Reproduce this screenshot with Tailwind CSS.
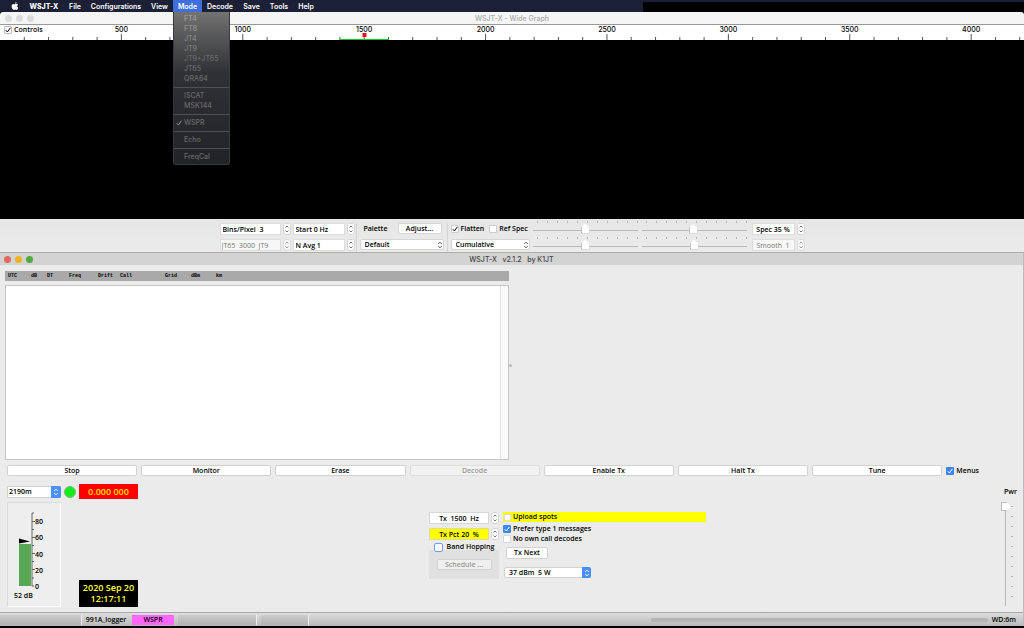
<!DOCTYPE html>
<html lang="en">
<head>
<meta charset="utf-8">
<title>WSJT-X</title>
<script src="https://cdn.jsdelivr.net/npm/@tailwindcss/browser@4"></script>
</head>
<body class="min-h-screen flex flex-col bg-black text-black text-[7px] leading-[10px] font-semibold font-['Open_Sans',sans-serif] overflow-x-hidden">
<svg class="hidden">
  <symbol id="spin" viewBox="0 0 8 12"><rect x=".5" y=".5" width="7" height="11" rx="2.500" fill="#fff" stroke="#d4d4d4"/><path d="M2.500 4.500 4 3l1.500 1.500M2.500 7.500 4 9l1.500-1.500" fill="none" stroke="#666" stroke-width=".9"/></symbol>
  <symbol id="updown" viewBox="0 0 6 8"><path d="M1.200 3 3 1.200 4.800 3M1.200 5 3 6.800 4.800 5" fill="none" stroke="currentColor" stroke-width=".9"/></symbol>
  <symbol id="tick" viewBox="0 0 8 8"><path d="M1.800 4.200 3.400 6 6.400 1.800" fill="none" stroke="currentColor" stroke-width="1"/></symbol>
</svg>

<nav class="h-3 flex bg-[#1c2036] text-white leading-[13px] font-['Inter',sans-serif] [&_button]:h-3">
  <button class="w-6 flex justify-end items-center pr-[5px]" aria-label="Apple menu"><svg class="w-2 h-2" viewBox="0 0 16 16" fill="#fff"><path d="M11 0c.1 1.700-1.300 3.400-3 3.400C7.800 1.800 9.300.2 11 0zM8.200 4.500c.7 0 1.600-.8 3-.8 1.100 0 2.200.6 2.900 1.600-2.600 1.500-2.100 5 .5 6.100-.6 1.700-2 4.400-3.500 4.400-1.100 0-1.500-.7-2.800-.7s-1.800.7-2.800.7C3.500 15.800 1 11.800 1.200 8.500c.1-3 2-4.700 4-4.700 1.300 0 2.300.7 3 .7z"/></svg></button>
  <button class="w-10 font-extrabold">WSJT-X</button>
  <button class="w-[22px]">File</button>
  <button class="w-[60px]">Configurations</button>
  <button class="w-[27px]">View</button>
  <div class="relative w-[29px]">
    <button class="w-full block bg-[#3f6fdc]">Mode</button>
    <ul class="absolute z-10 left-0 top-3 w-[57px] pt-[2px] pb-[2px] rounded-b-[3px] bg-linear-to-b from-[#737373] via-[#303134] via-40% to-[#222327] leading-[10px] font-medium text-[#68696c] border-x border-b border-[#3a3a3c] [&>li]:pl-[10px] [&>hr]:my-[3px] [&>hr]:border-[#505155]">
      <li class="text-[#999]">FT4</li><li class="text-[#929292]">FT8</li><li class="text-[#858585]">JT4</li><li class="text-[#7c7c7c]">JT9</li><li>JT9+JT65</li><li>JT65</li><li>QRA64</li>
      <hr><li>ISCAT</li><li>MSK144</li>
      <hr><li class="relative"><svg class="absolute left-[1px] top-[1px] w-2 h-2 text-[#999]"><use href="#tick"/></svg>WSPR</li>
      <hr><li>Echo</li><hr><li>FreqCal</li>
    </ul>
  </div>
  <button class="w-9">Decode</button>
  <button class="w-[27px]">Save</button>
  <button class="w-7">Tools</button>
  <button class="w-[26px]">Help</button>
  <div class="flex-1 flex justify-end items-start pt-[2px]"><div class="w-[54%] h-[10px] bg-black"></div></div>
</nav>

<section>
  <header class="h-[13px] flex items-center bg-[#f5f5f5] border-b border-[#999] font-['Inter',sans-serif] font-medium text-[#aaa] leading-[13px] rounded-t-[3px]">
    <div class="w-20 flex gap-1 pl-[5px]"><i class="size-[7px] rounded-full bg-[#dcdcdc]"></i><i class="size-[7px] rounded-full bg-[#dcdcdc]"></i><i class="size-[7px] rounded-full bg-[#dcdcdc]"></i></div>
    <h1 class="flex-1 text-center">WSJT-X - Wide Graph</h1><div class="w-20"></div>
  </header>
  <div class="relative h-[15px] bg-white">
    <svg id="ruler" class="block w-full h-full" font-family="Inter, sans-serif" font-size="7" font-weight="500" text-anchor="middle"></svg>
    <label class="absolute left-1 top-0 h-[9px] flex items-center gap-[2px]"><input type="checkbox" checked class="appearance-none size-2 bg-white border border-[#bbb] rounded-[1px]"><svg class="absolute left-0 w-2 h-2"><use href="#tick"/></svg>Controls</label>
  </div>
  <div class="h-[179px] bg-black"></div>

  <form class="h-[34px] flex justify-center bg-linear-to-b from-[#e6e6e6] to-[#ebebeb] border-b border-[#b5aaa5] pt-1">
    <div class="grid grid-cols-[61px_8px_52px_8px] gap-x-[2px] gap-y-1 content-start pr-[1px] border-r border-[#d4d4d4]">
      <input aria-label="Bins per pixel" value="Bins/Pixel  3" class="w-full h-3 px-[2px] bg-white border border-[#ddd]"><button type="button" aria-label="Step bins"><svg class="w-2 h-3"><use href="#spin"/></svg></button>
      <input aria-label="Start frequency" value="Start 0 Hz" class="w-full h-3 px-[2px] bg-white border border-[#ddd]"><button type="button" aria-label="Step start"><svg class="w-2 h-3"><use href="#spin"/></svg></button>
      <input aria-label="JT65 JT9 split" disabled value="JT65  3000  JT9" class="w-full h-3 px-[1px] bg-[#f7f7f7] border border-[#ddd] text-[#777] font-medium"><button type="button" aria-label="Step split" disabled><svg class="w-2 h-3 opacity-60"><use href="#spin"/></svg></button>
      <input aria-label="Number averaged" value="N Avg 1" class="w-full h-3 px-[2px] bg-white border border-[#ddd]"><button type="button" aria-label="Step averages"><svg class="w-2 h-3"><use href="#spin"/></svg></button>
    </div>
    <div class="w-[91px] flex flex-col gap-[5px] px-[3px] border-r border-[#d4d4d4]">
      <div class="flex justify-between items-center pl-1 pr-[2px]"><span>Palette</span><button type="button" class="w-11 h-[11px] leading-[9px] bg-white border border-[#d6d6d6] rounded-[2px]">Adjust...</button></div>
      <div class="relative"><select aria-label="Palette" class="appearance-none block w-full h-[11px] pl-1 bg-white border border-[#d6d6d6] rounded-[2px]"><option>Default</option></select><svg class="absolute right-[1px] top-[2px] w-[6px] h-2 text-[#444]"><use href="#updown"/></svg></div>
    </div>
    <div class="w-[83px] flex flex-col gap-[5px] pl-[3px] pr-[1px]">
      <div class="h-[11px] flex items-center gap-[5px]">
        <label class="relative flex items-center gap-[2px]"><input type="checkbox" checked class="appearance-none size-2 bg-white border border-[#ccc] rounded-[1px]"><svg class="absolute left-0 w-2 h-2"><use href="#tick"/></svg>Flatten</label>
        <label class="flex items-center gap-[2px]"><input type="checkbox" class="appearance-none size-2 bg-white border border-[#ccc] rounded-[1px]">Ref&nbsp;Spec</label>
      </div>
      <div class="relative"><select aria-label="Spectrum type" class="appearance-none block w-full h-[11px] pl-1 bg-white border border-[#d6d6d6] rounded-[2px]"><option>Cumulative</option></select><svg class="absolute right-[1px] top-[2px] w-[6px] h-2 text-[#444]"><use href="#updown"/></svg></div>
    </div>
    <div class="grid grid-cols-[105px_105px] gap-x-1 gap-y-0 content-start px-[2px] -mt-1 pt-[2px] [&>div]:h-4 [&_i]:block [&_i]:h-[2px] [&_i]:ml-1 [&_i]:bg-[repeating-linear-gradient(to_right,#b5b5b5_0_1px,transparent_1px_10px)] [&_input]:appearance-none [&_input]:block [&_input]:w-full [&_input]:h-[11px] [&_input]:bg-[linear-gradient(#b9b9b9,#b9b9b9)] [&_input]:bg-[length:100%_1px] [&_input]:bg-no-repeat [&_input]:bg-[position:0_7px] [&_input::-webkit-slider-thumb]:appearance-none [&_input::-webkit-slider-thumb]:w-[9px] [&_input::-webkit-slider-thumb]:h-[10px] [&_input::-webkit-slider-thumb]:bg-white [&_input::-webkit-slider-thumb]:border [&_input::-webkit-slider-thumb]:border-t-0 [&_input::-webkit-slider-thumb]:border-[#c4c4c4] [&_input::-webkit-slider-thumb]:[clip-path:polygon(50%_0,100%_45%,100%_100%,0_100%,0_45%)]">
      <div><i></i><input type="range" value="50" aria-label="Gain"></div><div><i></i><input type="range" value="49" aria-label="Spectrum gain"></div>
      <div><i></i><input type="range" value="50" aria-label="Zero"></div><div><i></i><input type="range" value="50" aria-label="Spectrum zero"></div>
    </div>
    <div class="grid grid-cols-[43px_8px] gap-x-[2px] gap-y-1 content-start pl-[3px]">
      <input aria-label="Spectrum height" value="Spec 35 %" class="w-full h-3 text-center bg-white border border-[#ddd]"><button type="button" aria-label="Step spectrum"><svg class="w-2 h-3"><use href="#spin"/></svg></button>
      <input aria-label="Smoothing" disabled value="Smooth  1" class="w-full h-3 text-center bg-[#f7f7f7] border border-[#ddd] text-[#777] font-medium"><button type="button" aria-label="Step smoothing" disabled><svg class="w-2 h-3 opacity-60"><use href="#spin"/></svg></button>
    </div>
  </form>
</section>

<main class="flex-1 flex flex-col bg-[#ebebeb] mb-[2px] border-r border-[#bbb]">
  <header class="h-3 flex items-center bg-[#d3d3d3] font-['Inter',sans-serif] font-medium text-[#444] leading-[13px]">
    <div class="w-20 flex gap-1 pl-1"><i class="size-[7px] rounded-full bg-[#e0695c]"></i><i class="size-[7px] rounded-full bg-[#f0b21f]"></i><i class="size-[7px] rounded-full bg-[#4fa83d]"></i></div>
    <h2 class="flex-1 text-center whitespace-pre">WSJT-X   v2.1.2   by K1JT</h2><div class="w-20"></div>
  </header>

  <div class="flex items-center pt-[6px] pl-[5px]">
    <div class="w-[504px] flex flex-col gap-1">
      <div class="h-[10px] grid grid-cols-[23px_16px_22px_29px_22px_45px_26px_25px_auto] pl-[3px] bg-[#a9a9a9] font-['Liberation_Mono',monospace] font-bold text-[5px]"><span>UTC</span><span>dB</span><span>DT</span><span>Freq</span><span>Drift</span><span>Call</span><span>Grid</span><span>dBm</span><span>km</span></div>
      <div class="h-[175px] flex justify-end bg-white border border-[#c6c6c6]"><div class="w-2 bg-[#fafafa] border-l border-[#e4e4e4]"></div></div>
    </div>
    <i class="size-[3px] rounded-full bg-[#bbb]"></i>
  </div>

  <div class="flex items-center gap-1 pt-[5px] pl-[7px] pr-11">
    <button class="flex-1 h-[11px] leading-[9px] bg-white border border-[#d2d2d2] rounded-[2px]">Stop</button>
    <button class="flex-1 h-[11px] leading-[9px] bg-white border border-[#d2d2d2] rounded-[2px]">Monitor</button>
    <button class="flex-1 h-[11px] leading-[9px] bg-white border border-[#d2d2d2] rounded-[2px]">Erase</button>
    <button disabled class="flex-1 h-[11px] leading-[9px] bg-[#f2f2f2] border border-[#dedede] rounded-[2px] text-[#999]">Decode</button>
    <button class="flex-1 h-[11px] leading-[9px] bg-white border border-[#d2d2d2] rounded-[2px]">Enable Tx</button>
    <button class="flex-1 h-[11px] leading-[9px] bg-white border border-[#d2d2d2] rounded-[2px]">Halt Tx</button>
    <button class="flex-1 h-[11px] leading-[9px] bg-white border border-[#d2d2d2] rounded-[2px]">Tune</button>
    <label class="relative flex items-center gap-[2px]"><input type="checkbox" checked class="appearance-none size-2 bg-[#3f86f5] rounded-[1px]"><svg class="absolute left-0 w-2 h-2 text-white"><use href="#tick"/></svg>Menus</label>
  </div>

  <div class="flex-1 flex justify-between pl-[7px] pr-[6px] pb-[5px] pt-2">
    <div class="w-[131px] flex flex-col gap-[3px]">
      <div class="flex items-center gap-[3px]">
        <div class="relative w-[54px]"><select aria-label="Band" class="appearance-none block w-full h-3 pl-[1px] bg-white border border-[#d2d2d2]"><option>2190m</option></select><span class="absolute right-0 top-0 w-[10px] h-3 flex items-center justify-center bg-[#4a90f5] text-white rounded-r-[2px]"><svg class="w-[6px] h-2"><use href="#updown"/></svg></span></div>
        <i class="size-3 rounded-full bg-[#13ee1b] border border-[#7fb87f]"></i>
        <output class="flex-1 h-[15px] leading-[15px] text-center bg-[#ff0000] text-[#ffe000] text-[9px]">0.000 000</output>
      </div>
      <div class="flex-1 flex justify-between items-end">
        <div class="w-[54px] h-full bg-[#eee] border border-[#dcdcdc] border-b-white border-r-white">
          <svg class="block w-[52px] h-[103px]" viewBox="8 503 52 103" font-family="Open Sans, sans-serif" font-size="8" font-weight="600">
            <rect x="19" y="544" width="12" height="42" fill="#58a856"/><path d="M19 538.500v5l11-2z"/>
            <path d="M34 513h-2v73h2M32 521.500h3M32 529.500h2M32 537.500h3M32 545.500h2M32 553.500h3M32 561.500h2M32 569.500h3M32 578h2" fill="none" stroke="#444" stroke-width=".8"/>
            <g font-size="7"><text x="35" y="524">80</text><text x="35" y="540">60</text><text x="35" y="557">40</text><text x="35" y="573">20</text><text x="35" y="589">0</text><text x="14" y="598">52 dB</text></g>
          </svg>
        </div>
        <div class="w-[59px] h-[27px] pt-[2px] bg-black text-[#ffff30] text-center text-[9px] leading-[11px]"><p>2020 Sep 20</p><p>12:17:11</p></div>
      </div>
    </div>

    <div class="flex gap-1 pt-7 pl-[111px]">
      <div class="w-[70px] flex flex-col">
        <div class="grid grid-cols-[60px_8px] gap-x-[2px] gap-y-1">
          <input aria-label="Tx frequency" value="Tx  1500  Hz" class="w-full h-3 bg-white border border-[#d6d6d6] text-center"><button aria-label="Step Tx frequency"><svg class="w-2 h-3"><use href="#spin"/></svg></button>
          <input aria-label="Tx percent" value="Tx Pct 20  %" class="w-full h-3 bg-[#ffff00] border border-[#dede9a] text-center"><button aria-label="Step Tx percent"><svg class="w-2 h-3"><use href="#spin"/></svg></button>
        </div>
        <fieldset class="h-[39px] w-full flex flex-col items-center bg-[linear-gradient(transparent_10px,#e0e0e0_10px)] pt-[2px]">
          <label class="flex items-center gap-1"><input type="checkbox" class="appearance-none size-[9px] bg-white border border-[#6a9ff0] rounded-[2px]">Band Hopping</label>
          <button disabled class="w-[55px] h-[11px] mt-[7px] leading-[9px] bg-[#efefef] border border-[#d2d2d2] rounded-[2px] text-[#999]">Schedule ...</button>
        </fieldset>
      </div>
      <div class="w-[203px] flex flex-col items-start">
        <label class="w-full h-[10px] flex items-center gap-[2px] pl-[1px] bg-[#ffff00]"><input type="checkbox" class="appearance-none size-[7px] bg-white border border-[#ddd]">Upload spots</label>
        <label class="relative flex items-center gap-[2px] mt-[2px]"><input type="checkbox" checked class="appearance-none size-2 bg-[#3f86f5] rounded-[1px]"><svg class="absolute left-0 w-2 h-2 text-white"><use href="#tick"/></svg>Prefer type 1 messages</label>
        <label class="flex items-center gap-[2px]"><input type="checkbox" class="appearance-none size-2 bg-white border border-[#d6d6d6] rounded-[1px]">No own call decodes</label>
        <button class="w-[42px] h-3 ml-[3px] mt-[3px] leading-[10px] bg-white border border-[#d2d2d2] rounded-[2px]">Tx Next</button>
        <div class="relative w-[87px] ml-[1px] mt-2"><select aria-label="Power" class="appearance-none block w-full h-[11px] pl-1 bg-white border border-[#d2d2d2] rounded-[2px]"><option>37 dBm&nbsp; 5 W</option></select><span class="absolute right-0 top-0 w-[9px] h-[11px] flex items-center justify-center bg-[#4a90f5] text-white rounded-r-[2px]"><svg class="w-[6px] h-2"><use href="#updown"/></svg></span></div>
      </div>
    </div>

    <div class="w-[131px] flex flex-col items-end pt-[3px]">
      <label for="pwr">Pwr</label>
      <div class="flex-1 flex pt-[5px] pr-1">
        <input id="pwr" type="range" value="100" class="appearance-none w-[10px] h-[104px] [writing-mode:vertical-lr] [direction:rtl] bg-[linear-gradient(#b9b9b9,#b9b9b9)] bg-[length:1px_100%] bg-no-repeat bg-[position:4px_0] [&::-webkit-slider-thumb]:appearance-none [&::-webkit-slider-thumb]:w-[10px] [&::-webkit-slider-thumb]:h-[9px] [&::-webkit-slider-thumb]:bg-white [&::-webkit-slider-thumb]:border [&::-webkit-slider-thumb]:border-r-0 [&::-webkit-slider-thumb]:border-[#bbb] [&::-webkit-slider-thumb]:[clip-path:polygon(0_0,55%_0,100%_50%,55%_100%,0_100%)]">
        <i class="w-[2px] h-[100px] mt-1 bg-[repeating-linear-gradient(#b5b5b5_0_1px,transparent_1px_10px)]"></i>
      </div>
    </div>
  </div>

  <footer class="h-[14px] flex items-center pr-[7px] border-t border-[#a8a8a8] bg-linear-to-b from-[#dedede] to-[#b9b9b9]">
    <div class="w-[82px] h-[10px] border-r border-[#eee] bg-black/5"></div>
    <span class="w-[50px] pr-[2px] text-center">991A_logger</span>
    <span class="w-[42px] h-[10px] bg-[#ff66ff] text-center">WSPR</span>
    <div class="w-[79px] h-[10px] ml-1 border-r border-[#eee] bg-black/5"></div>
    <div class="w-[48px] h-[10px] ml-1 border-r border-[#eee] bg-black/5"></div>
    <div class="flex-1"></div>
    <div class="w-[337px] h-1 mr-1 rounded-full bg-[#b4b4b4]" role="progressbar" aria-label="Sequence progress"></div>
    <span>WD:6m</span>
  </footer>
</main>

<script>
  // Frequency ruler: a tick each 100 Hz, a labelled one each 500 Hz.
  const perHz = 0.02371;
  let marks = '';
  for (let f = 100; f <= 4200; f += 100) {
    const major = f % 500 === 0;
    const x = f * perHz + '%';
    marks += `<line x1="${x}" x2="${x}" y1="${major ? 9 : 12}" y2="15" stroke="#555"/>`;
    if (major) marks += `<text x="${x}" y="7">${f}</text>`;
  }
  marks += `<rect x="33.200%" y="14" width="4.800%" height="1" fill="#00d020"/>`;
  marks += `<rect x="35.400%" y="8" width="4" height="4" fill="#f01010"/>`;
  document.getElementById('ruler').innerHTML = marks;
</script>
</body>
</html>
